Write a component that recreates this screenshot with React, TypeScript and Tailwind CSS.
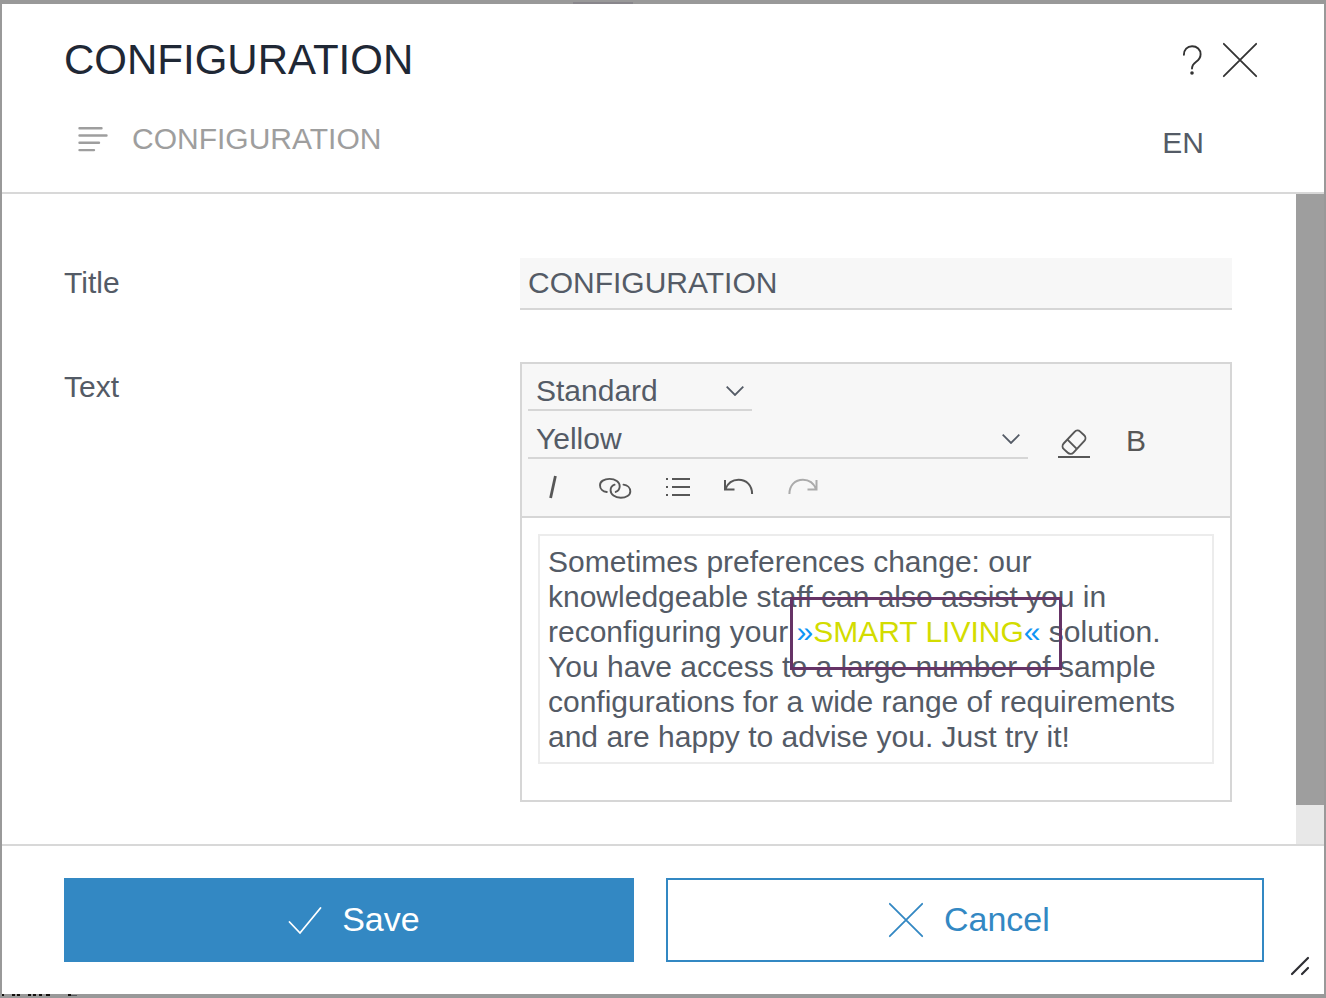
import { useState } from "react";
import type { ReactNode } from "react";

interface ToolButtonProps {
  label: string;
  disabled?: boolean;
  className?: string;
  children: ReactNode;
}

function ToolButton({ label, disabled, className = "", children }: ToolButtonProps) {
  return (
    <button
      type="button"
      aria-label={label}
      disabled={disabled}
      className={`flex h-10 w-[62px] items-center justify-center text-[#575757] disabled:text-[#ababab] ${className}`}
    >
      {children}
    </button>
  );
}

interface FormatSelectProps {
  label: string;
  value: string;
  options: string[];
  onChange: (value: string) => void;
  className: string;
}

function FormatSelect({ label, value, options, onChange, className }: FormatSelectProps) {
  return (
    <div className={`relative ml-1.5 h-10 ${className}`}>
      <select
        aria-label={label}
        value={value}
        onChange={(e) => onChange(e.target.value)}
        className="block h-full w-full appearance-none border-b-2 border-[#d6d6d6] bg-transparent px-2 pt-0.5 leading-9 outline-none"
      >
        {options.map((option) => (
          <option key={option}>{option}</option>
        ))}
      </select>
      <svg
        viewBox="0 0 18 10"
        className="pointer-events-none absolute top-[15px] right-2 h-2.5 w-[18px]"
        fill="none"
        stroke="currentColor"
        strokeWidth="1.8"
      >
        <path d="M.7.7 9 9 17.3.7" />
      </svg>
    </div>
  );
}

function CrossIcon() {
  return (
    <svg viewBox="0 0 36 36" className="size-9" fill="none" stroke="currentColor" strokeWidth="1.8" strokeLinecap="round">
      <path d="M1.8 1.8 34.2 34.2M34.2 1.8 1.8 34.2" />
    </svg>
  );
}

export default function App() {
  const [title, setTitle] = useState("CONFIGURATION");
  const [format, setFormat] = useState("Standard");
  const [color, setColor] = useState("Yellow");

  return (
    <div className="flex min-h-screen flex-col bg-[#999999] px-0.5 font-['Liberation_Sans',Arial,sans-serif] text-[30px] text-[#545b66]">
      <div className="flex h-1 items-end">
        <div className="ml-[571px] h-0.5 w-[60px] bg-[#88868b]" />
      </div>

      <div role="dialog" aria-labelledby="dialog-title" className="flex flex-1 flex-col bg-white">
        <header className="border-b-2 border-[#d8d8d8] pt-8 pr-[66px] pb-[31px] pl-[62px]">
          <div className="flex items-center justify-between">
            <h1 id="dialog-title" className="text-[42px] leading-[48px] text-[#1f2835]">
              CONFIGURATION
            </h1>
            <div className="flex items-center gap-5 text-[#333333]">
              <button type="button" aria-label="Help">
                <svg viewBox="0 0 20 32" className="h-8 w-5" fill="none" stroke="currentColor" strokeWidth="1.9" strokeLinecap="round">
                  <path d="M1.9 10.8C1.9 5.6 5.2 2.3 10.1 2.3s8.5 3.3 8.5 8c0 8.5-8.6 6.3-8.6 14.3" />
                  <circle cx="10" cy="29" r="1.8" fill="currentColor" stroke="none" />
                </svg>
              </button>
              <button type="button" aria-label="Close">
                <CrossIcon />
              </button>
            </div>
          </div>

          <div className="mt-[37px] flex h-10 justify-between leading-9">
            <button type="button" className="flex items-center self-start text-[#9e9e9e]">
              <svg viewBox="0 0 32 28" className="mr-[22px] ml-3.5 h-7 w-8" stroke="currentColor" strokeWidth="2.4" strokeLinecap="round">
                <path d="M1.5 3.2H23.5M1.5 10.5H28.5M1.5 17.8H21M1.5 25.1H16" />
              </svg>
              CONFIGURATION
            </button>
            <button type="button" className="mr-[54px] self-end">
              EN
            </button>
          </div>
        </header>

        <div className="flex flex-1">
          <main className="flex flex-1 flex-col gap-[52px] pt-16 pr-16 pb-[42px] pl-[62px]">
            <div className="flex">
              <label htmlFor="title" className="w-[456px] leading-[50px]">
                Title
              </label>
              <input
                id="title"
                value={title}
                onChange={(e) => setTitle(e.target.value)}
                className="h-[52px] min-w-0 flex-1 border-b-2 border-[#d6d6d6] bg-[#f7f7f7] px-2 outline-none"
              />
            </div>

            <div className="flex">
              <span id="text-label" className="w-[456px] leading-[50px]">
                Text
              </span>
              <div className="min-w-0 flex-1 border-2 border-[#d6d6d6]">
                <div className="flex flex-col gap-2 border-b-2 border-[#d6d6d6] bg-[#f7f7f7] pt-[7px] pb-[9px]">
                  <FormatSelect
                    label="Paragraph style"
                    value={format}
                    options={["Standard", "Heading"]}
                    onChange={setFormat}
                    className="w-56"
                  />
                  <div className="flex">
                    <FormatSelect
                      label="Text colour"
                      value={color}
                      options={["Yellow", "Blue"]}
                      onChange={setColor}
                      className="w-[500px]"
                    />
                    <ToolButton label="Clear formatting" className="ml-[15px] pt-1.5">
                      <svg viewBox="0 0 32 32" className="size-8" fill="none" stroke="currentColor" strokeWidth="1.9">
                        <rect x="4" y="9.5" width="24" height="13.4" rx="4" transform="rotate(-47 16 16.2)" />
                        <path d="m9.5 13.6 9 9" />
                        <path d="M0 31h32" strokeWidth="2" />
                      </svg>
                    </ToolButton>
                    <ToolButton label="Bold">
                      <span className="pt-0.5">B</span>
                    </ToolButton>
                  </div>
                  <div className="flex">
                    <ToolButton label="Italic">
                      <svg viewBox="0 0 12 24" className="h-6 w-3" stroke="currentColor" strokeWidth="2.8">
                        <path d="M8.4 1 3.6 23" />
                      </svg>
                    </ToolButton>
                    <ToolButton label="Link" className="pt-0.5">
                      <svg viewBox="0 0 34 24" className="h-6 w-[34px]" fill="none" stroke="currentColor" strokeWidth="1.9" strokeLinecap="round">
                        <path d="M8.8 16C4.8 15.5 2 12.8 2 9.2 2 5.4 6.2 2.9 11.5 2.9c6 0 10.2 3.2 10.2 7.4 0 2.7-1.5 4.7-4 5.6" />
                        <path d="M25.5 8.6c4 .5 6.8 3.2 6.8 6.8 0 3.8-4.2 6.3-9.5 6.3-6 0-10.2-3.2-10.2-7.4 0-2.7 1.5-4.7 4-5.6" />
                      </svg>
                    </ToolButton>
                    <ToolButton label="Bullet list" className="pl-0.5">
                      <svg viewBox="0 0 24 18" className="h-[18px] w-6" stroke="currentColor" strokeWidth="2">
                        <path d="M0 1h2M0 9h2M0 17h2M6 1h18M6 9h18M6 17h18" />
                      </svg>
                    </ToolButton>
                    <ToolButton label="Undo">
                      <svg viewBox="0 0 30 18" className="h-[18px] w-[30px]" fill="none" stroke="currentColor" strokeWidth="2">
                        <path d="M1 2v9.500H10.500M1.300 11.300C3.700 5.300 8.500 1.800 14.500 1.800c8 0 13.600 5.400 13.600 14.200" />
                      </svg>
                    </ToolButton>
                    <ToolButton label="Redo" disabled className="pl-1">
                      <svg viewBox="0 0 30 18" className="h-[18px] w-[30px]" fill="none" stroke="currentColor" strokeWidth="2">
                        <path d="M28.500 2v9.500H19.500M28.200 11.300C25.800 5.300 21 1.800 15 1.800 7 1.800 1.400 7.200 1.400 16" />
                      </svg>
                    </ToolButton>
                  </div>
                </div>

                <div
                  role="textbox"
                  aria-labelledby="text-label"
                  aria-multiline="true"
                  contentEditable
                  suppressContentEditableWarning
                  className="mx-4 mt-4 mb-9 border-2 border-[#ececec] p-2 leading-[35px] outline-none"
                >
                  Sometimes preferences change: our knowledgeable staff can also assist you in reconfiguring your{" "}
                  <span className="relative whitespace-nowrap text-[#0f95f5]">
                    »<span className="text-[#d3dc00]">SMART LIVING</span>«
                    {/* Highlight frame drawn over the neighbouring lines */}
                    <span className="pointer-events-none absolute -top-[18px] -right-[22px] -bottom-[22px] -left-1.5 border-[3px] border-[#663366]" />
                  </span>{" "}
                  solution. You have access to a large number of sample configurations for a wide range of requirements
                  and are happy to advise you. Just try it!
                </div>
              </div>
            </div>
          </main>

          <div className="w-7 bg-[#e8e8e8]">
            <div className="h-[94%] bg-[#9e9e9e]" />
          </div>
        </div>

        <footer className="relative flex gap-8 border-t-2 border-[#d8d8d8] py-8 pr-[60px] pl-[62px] text-[34px]">
          <button
            type="button"
            className="flex h-[84px] flex-auto items-center justify-center gap-5 bg-[#3388c3] pr-0.5 pl-2.5 text-white"
          >
            <svg viewBox="0 0 36 36" className="size-9" fill="none" stroke="currentColor" strokeWidth="1.8" strokeLinecap="round">
              <path d="M3.5 20 14 31 34.5 6" />
            </svg>
            <span className="pb-0.5">Save</span>
          </button>
          <button
            type="button"
            className="flex h-[84px] flex-auto items-center justify-center gap-5 border-2 border-[#3388c3] pl-2 text-[#3388c3]"
          >
            <CrossIcon />
            <span className="pb-0.5">Cancel</span>
          </button>
          <svg
            viewBox="0 0 20 20"
            className="absolute right-3.5 bottom-[18px] size-5 text-[#2e2e33]"
            stroke="currentColor"
            strokeWidth="2.2"
            strokeLinecap="round"
          >
            <path d="M2 18 18 2M12 18l6-6" />
          </svg>
        </footer>
      </div>

      {/* Edge of the page peeking out below the dialog */}
      <svg viewBox="0 0 80 4" className="h-1 w-20" fill="#15110f">
        <path d="M0 0h2v2H0zM10 0h3v2h-3zM15 0h3v2h-3zM26 0h3v2h-3zM31 0h3v2h-3zM37 0h3v2h-3zM44 0h4v2h-4zM66 0h3v2h-3z" />
        <path d="M69 1h6v1h-6z" fill="#55585c" />
      </svg>
    </div>
  );
}
